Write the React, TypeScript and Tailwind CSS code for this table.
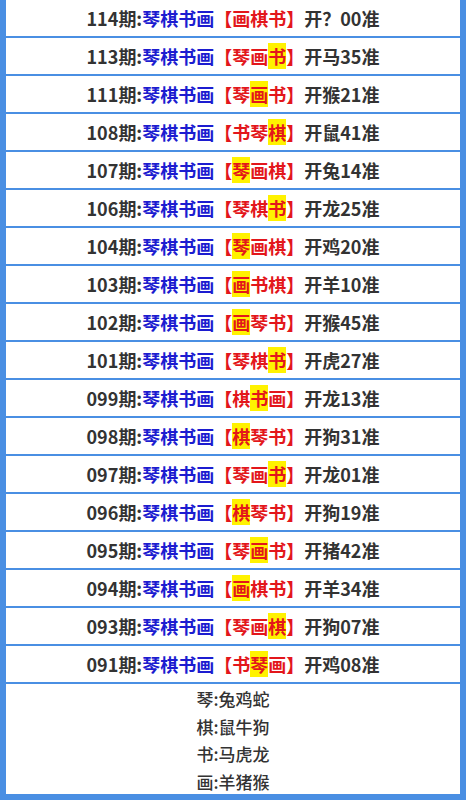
import React from "react"

type Row = { no: string; pick: string; mark: number; result: string }

const rows: Row[] = [
  { no: "114", pick: "画棋书", mark: -1, result: "开？00准" },
  { no: "113", pick: "琴画书", mark: 2, result: "开马35准" },
  { no: "111", pick: "琴画书", mark: 1, result: "开猴21准" },
  { no: "108", pick: "书琴棋", mark: 2, result: "开鼠41准" },
  { no: "107", pick: "琴画棋", mark: 0, result: "开兔14准" },
  { no: "106", pick: "琴棋书", mark: 2, result: "开龙25准" },
  { no: "104", pick: "琴画棋", mark: 0, result: "开鸡20准" },
  { no: "103", pick: "画书棋", mark: 0, result: "开羊10准" },
  { no: "102", pick: "画琴书", mark: 0, result: "开猴45准" },
  { no: "101", pick: "琴棋书", mark: 2, result: "开虎27准" },
  { no: "099", pick: "棋书画", mark: 1, result: "开龙13准" },
  { no: "098", pick: "棋琴书", mark: 0, result: "开狗31准" },
  { no: "097", pick: "琴画书", mark: 2, result: "开龙01准" },
  { no: "096", pick: "棋琴书", mark: 0, result: "开狗19准" },
  { no: "095", pick: "琴画书", mark: 1, result: "开猪42准" },
  { no: "094", pick: "画棋书", mark: 0, result: "开羊34准" },
  { no: "093", pick: "琴画棋", mark: 2, result: "开狗07准" },
  { no: "091", pick: "书琴画", mark: 1, result: "开鸡08准" },
]

const legend = ["琴:兔鸡蛇", "棋:鼠牛狗", "书:马虎龙", "画:羊猪猴"]

export default function App() {
  return (
    <div
      className="w-[466px] h-[800px] bg-white border-x-[6px] border-b-[6px] border-[#4a8fe3] text-[#333333]"
      style={{ fontFamily: '"Noto Sans CJK SC", "Noto Sans", sans-serif' }}
    >
      {rows.map((r) => (
        <div
          key={r.no}
          className="h-[38px] flex items-center justify-center border-b-2 border-[#4a8fe3] text-[18px] font-bold leading-none whitespace-nowrap"
        >
          <span>{r.no}期:</span>
          <span className="text-[#1c1cd0]">琴棋书画</span>
          <span className="text-[#e3161b]">
            【
            {r.pick.split("").map((c, i) => (
              <span key={i} className={i === r.mark ? "bg-[#fff200]" : ""}>
                {c}
              </span>
            ))}
            】
          </span>
          <span>{r.result}</span>
        </div>
      ))}
      <div className="flex flex-col items-center pt-[1px] text-[17px] font-medium leading-[27.5px]">
        {legend.map((t) => (
          <div key={t}>{t}</div>
        ))}
      </div>
    </div>
  )
}
